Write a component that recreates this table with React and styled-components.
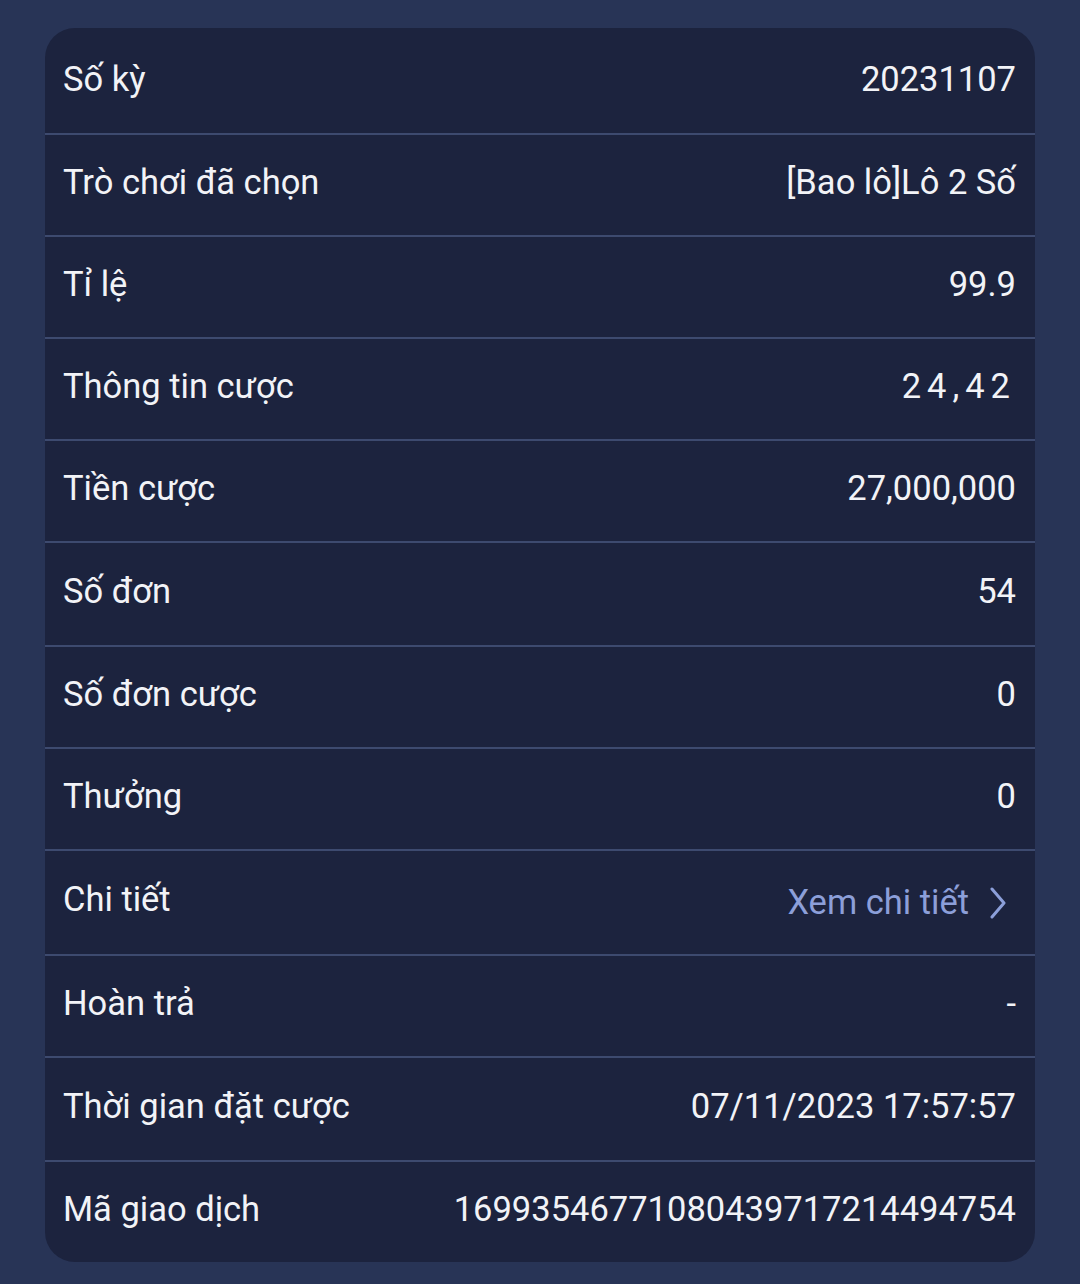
import React from "react";
import styled, { createGlobalStyle } from "styled-components";

const Global = createGlobalStyle`
  html, body { margin: 0; padding: 0; background: #283456; }
  body { font-family: Roboto, "Noto Sans", sans-serif; }
`;

const Page = styled.div`
  min-height: 1284px;
  background: #283456;
  padding: 28px 45px 22px;
  box-sizing: border-box;
`;

const Card = styled.div`
  background: #1c233e;
  border-radius: 30px;
  overflow: hidden;
`;

const Row = styled.div`
  display: flex;
  align-items: center;
  justify-content: space-between;
  height: ${(p) => p.$h || 102}px;
  padding: 0 19px 6px 18px;
  box-sizing: border-box;
  border-bottom: 2px solid #3d4a6f;
  &:first-child { padding-bottom: 3px; }
  &:last-child { border-bottom: none; }
`;

const Label = styled.span`
  color: #f2f3f7;
  font-size: 34.5px;
  line-height: 1;
`;

const Value = styled.span`
  color: #f2f3f7;
  font-size: 34.5px;
  line-height: 1;
  letter-spacing: ${(p) => p.$spacing || 0}px;
`;

const Link = styled.span`
  display: flex;
  align-items: center;
  gap: 20px;
  color: #8c9fd9;
  font-size: 34.5px;
  line-height: 1;
  margin-top: 6px;
`;

const rows = [
  ["Số kỳ", "20231107", 107],
  ["Trò chơi đã chọn", "[Bao lô]Lô 2 Số", 102],
  ["Tỉ lệ", "99.9", 102],
  ["Thông tin cược", "24,42", 102, true],
  ["Tiền cược", "27,000,000", 102],
  ["Số đơn", "54", 104],
  ["Số đơn cược", "0", 102],
  ["Thưởng", "0", 102],
  ["Chi tiết", null, 105],
  ["Hoàn trả", "-", 102],
  ["Thời gian đặt cược", "07/11/2023 17:57:57", 104],
  ["Mã giao dịch", "16993546771080439717214494754", 100],
];

export default function App() {
  return (
    <Page>
      <Global />
      <Card>
        {rows.map(([label, value, h, spaced]) => (
          <Row key={label} $h={h}>
            <Label>{label}</Label>
            {value === null ? (
              <Link>
                Xem chi tiết
                <svg width="18" height="32" viewBox="0 0 18 32" fill="none" style={{ marginRight: 9 }}>
                  <path d="M3 2 L15 16 L3 30" stroke="#8c9fd9" strokeWidth="3" strokeLinecap="round" strokeLinejoin="round" />
                </svg>
              </Link>
            ) : (
              <Value $spacing={spaced ? 6 : 0}>{value}</Value>
            )}
          </Row>
        ))}
      </Card>
    </Page>
  );
}
